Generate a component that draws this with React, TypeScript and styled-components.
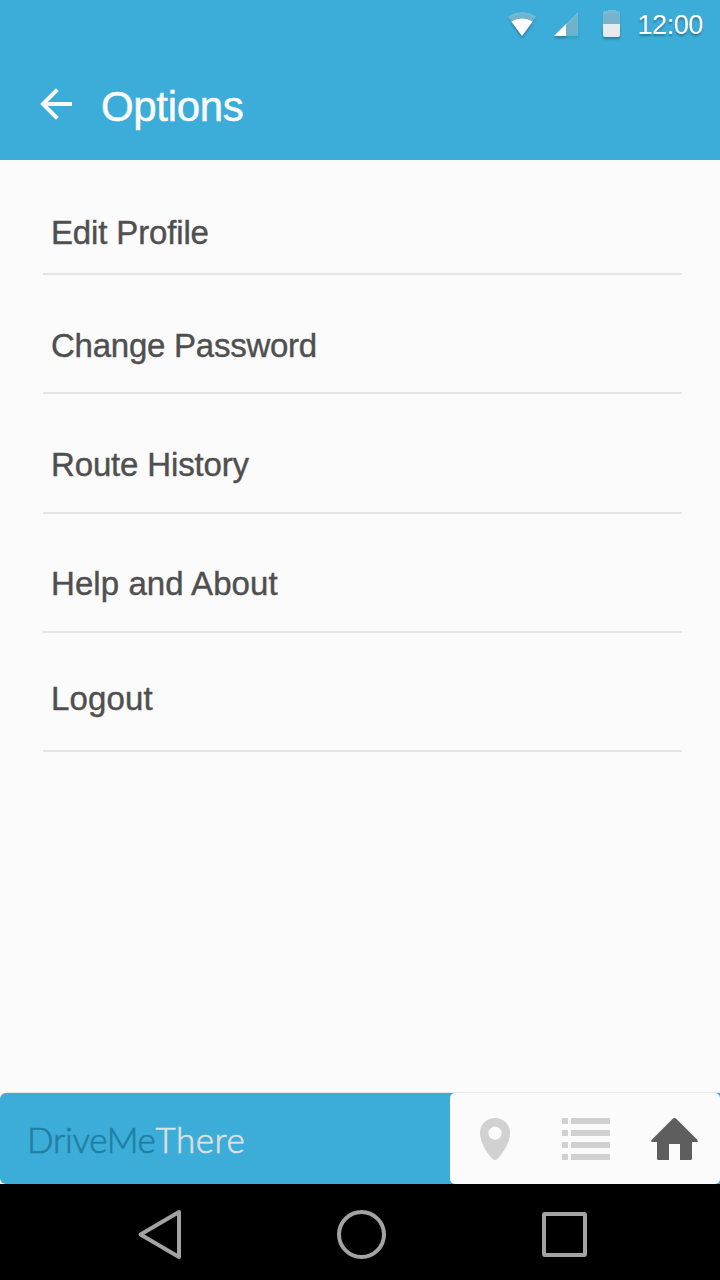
import React from "react";
import styled, { createGlobalStyle } from "styled-components";

const GlobalStyle = createGlobalStyle`
  * { box-sizing: border-box; }
  body {
    margin: 0;
    background: #fbfbfb;
    font-family: "Liberation Sans", Arial, sans-serif;
  }
  svg { display: block; }
`;

const Screen = styled.div`
  display: flex;
  flex-direction: column;
  width: 720px;
  height: 1280px;
  overflow: hidden;
  background: #fbfbfb;
`;

const Header = styled.header`
  height: 160px;
  flex: none;
  background: #3cacd9;
  color: #fff;
`;

const StatusBar = styled.div`
  display: flex;
  align-items: center;
  justify-content: flex-end;
  height: 50px;
  padding-right: 17px;
`;

const StatusIcons = styled.svg`
  filter: drop-shadow(0 2px 1px rgba(0, 0, 0, 0.28));
`;

const Clock = styled.time`
  margin-left: 13px;
  font-size: 27px;
  line-height: 50px;
  letter-spacing: -0.4px;
  text-shadow: 0 2px 2px rgba(0, 0, 0, 0.3);
`;

const TitleBar = styled.div`
  display: flex;
  align-items: center;
  height: 110px;
  padding-left: 38px;
  color: #fbfbfb;
`;

const BackButton = styled.button`
  width: 36px;
  height: 36px;
  padding: 0;
  border: 0;
  background: none;
  color: inherit;
  margin-bottom: 2px;
`;

const Title = styled.h1`
  margin: 4px 0 0 27px;
  font-size: 42px;
  line-height: 50px;
  font-weight: 400;
  letter-spacing: -0.35px;
  -webkit-text-stroke: 0.5px currentColor;
`;

const OptionList = styled.ul`
  flex: 1;
  margin: 0;
  padding: 0 38px 0 43px;
  list-style: none;
`;

const Option = styled.li<{ $height: number; $gap: number; $tracking: number }>`
  display: flex;
  align-items: flex-end;
  height: ${(p) => p.$height}px;
  padding: 0 8px ${(p) => p.$gap}px;
  border-bottom: 2px solid #e5e5e5;
  color: #4f4f4f;
  font-size: 33px;
  line-height: 40px;
  letter-spacing: ${(p) => p.$tracking}px;
  -webkit-text-stroke: 0.4px currentColor;
`;

const Footer = styled.footer`
  display: flex;
  flex: none;
  height: 91px;
  border-radius: 6px 0 0 6px;
  background: #3cacd9;
  box-shadow: 0 -1px 0 #e9e9e9;
`;

const Brand = styled.div`
  width: 450px;
  padding-left: 27px;
  font-family: Lato, sans-serif;
  font-size: 35px;
  font-weight: 300;
  line-height: 93px;
  letter-spacing: -0.3px;
  color: #1f7fa0;
  -webkit-text-stroke: 0.6px currentColor;
`;

const BrandAccent = styled.span`
  color: #e0e0e0;
  letter-spacing: 0.5px;
`;

const TabPanel = styled.nav`
  flex: 1;
  border-radius: 5px;
  background: #fbfbfb;
`;

const SystemNav = styled.div`
  flex: none;
  height: 96px;
  background: #000;
`;

const options = [
  { label: "Edit Profile", height: 115, gap: 20, tracking: -0.15 },
  { label: "Change Password", height: 119, gap: 26, tracking: -0.25 },
  { label: "Route History", height: 120, gap: 27, tracking: -0.15 },
  { label: "Help and About", height: 119, gap: 27, tracking: 0.07 },
  { label: "Logout", height: 119, gap: 31, tracking: 0.15 },
];

export default function App() {
  return (
    <Screen>
      <GlobalStyle />
      <Header>
        <StatusBar>
          <StatusIcons width="118" height="50" viewBox="506 0 118 50">
            <path d="M508 16.500Q522 8 536 16.500L522 36Z" fill="#d9d9d9" fillOpacity=".36" />
            <path d="M511.300 21.500Q522 15.500 532.700 21.500L522 36Z" fill="#fff" />
            <path d="M554 36L578 12V36Z" fill="#d9d9d9" fillOpacity=".35" />
            <path d="M554 36L566 24V36Z" fill="#fff" />
            <path d="M603 24V13Q603 11 605 11H608V10H616V11H618Q620 11 620 13V24Z" fill="#d9d9d9" fillOpacity=".4" />
            <path d="M603 24H620V35Q620 37 618 37H605Q603 37 603 35Z" fill="#e6ebed" />
          </StatusIcons>
          <Clock>12:00</Clock>
        </StatusBar>
        <TitleBar>
          <BackButton aria-label="Back">
            <svg width="36" height="36" viewBox="38 86 36 36" fill="none" stroke="currentColor" strokeWidth="4">
              <path d="M72 104H43M57.3 89.700L43 104L57.3 118.300" />
            </svg>
          </BackButton>
          <Title>Options</Title>
        </TitleBar>
      </Header>

      <OptionList>
        {options.map((o) => (
          <Option key={o.label} $height={o.height} $gap={o.gap} $tracking={o.tracking}>
            {o.label}
          </Option>
        ))}
      </OptionList>

      <Footer>
        <Brand>
          DriveMe<BrandAccent>There</BrandAccent>
        </Brand>
        <TabPanel>
          <svg width="270" height="91" viewBox="450 1093 270 91">
            <path
              d="M495 1118C486.500 1118 480 1124.500 480 1133C480 1144 489 1155 492.500 1159Q495 1161 497.500 1159C501 1155 510 1144 510 1133C510 1124.500 503.500 1118 495 1118ZM495 1126.500A6.600 6.600 0 1 1 495 1139.700A6.600 6.600 0 1 1 495 1126.500Z"
              fill="#d1d1d1"
              fillRule="evenodd"
            />
            <g fill="#d1d1d1">
              {[1118, 1130, 1142, 1154].map((y) => (
                <React.Fragment key={y}>
                  <rect x="562" y={y} width="6" height="6" rx=".5" />
                  <rect x="571" y={y} width="39" height="6" rx=".5" />
                </React.Fragment>
              ))}
            </g>
            <path
              d="M673 1118.600Q674.500 1117.400 676 1118.600L697.500 1140Q698.500 1142 696.500 1142H692V1158.500Q692 1160 690.500 1160H680V1144H669V1160H658.500Q657 1160 657 1158.500V1142H652.500Q650.500 1142 651.500 1140Z"
              fill="#5e5e5e"
            />
          </svg>
        </TabPanel>
      </Footer>

      <SystemNav>
        <svg width="720" height="96" viewBox="0 1184 720 96" fill="none" stroke="#a3a3a3" strokeWidth="4" strokeLinejoin="round">
          <path d="M179 1212L140.500 1234.500L179 1257Z" />
          <circle cx="361.500" cy="1234.500" r="22.500" />
          <rect x="544" y="1214" width="41" height="41" rx="1" />
        </svg>
      </SystemNav>
    </Screen>
  );
}
